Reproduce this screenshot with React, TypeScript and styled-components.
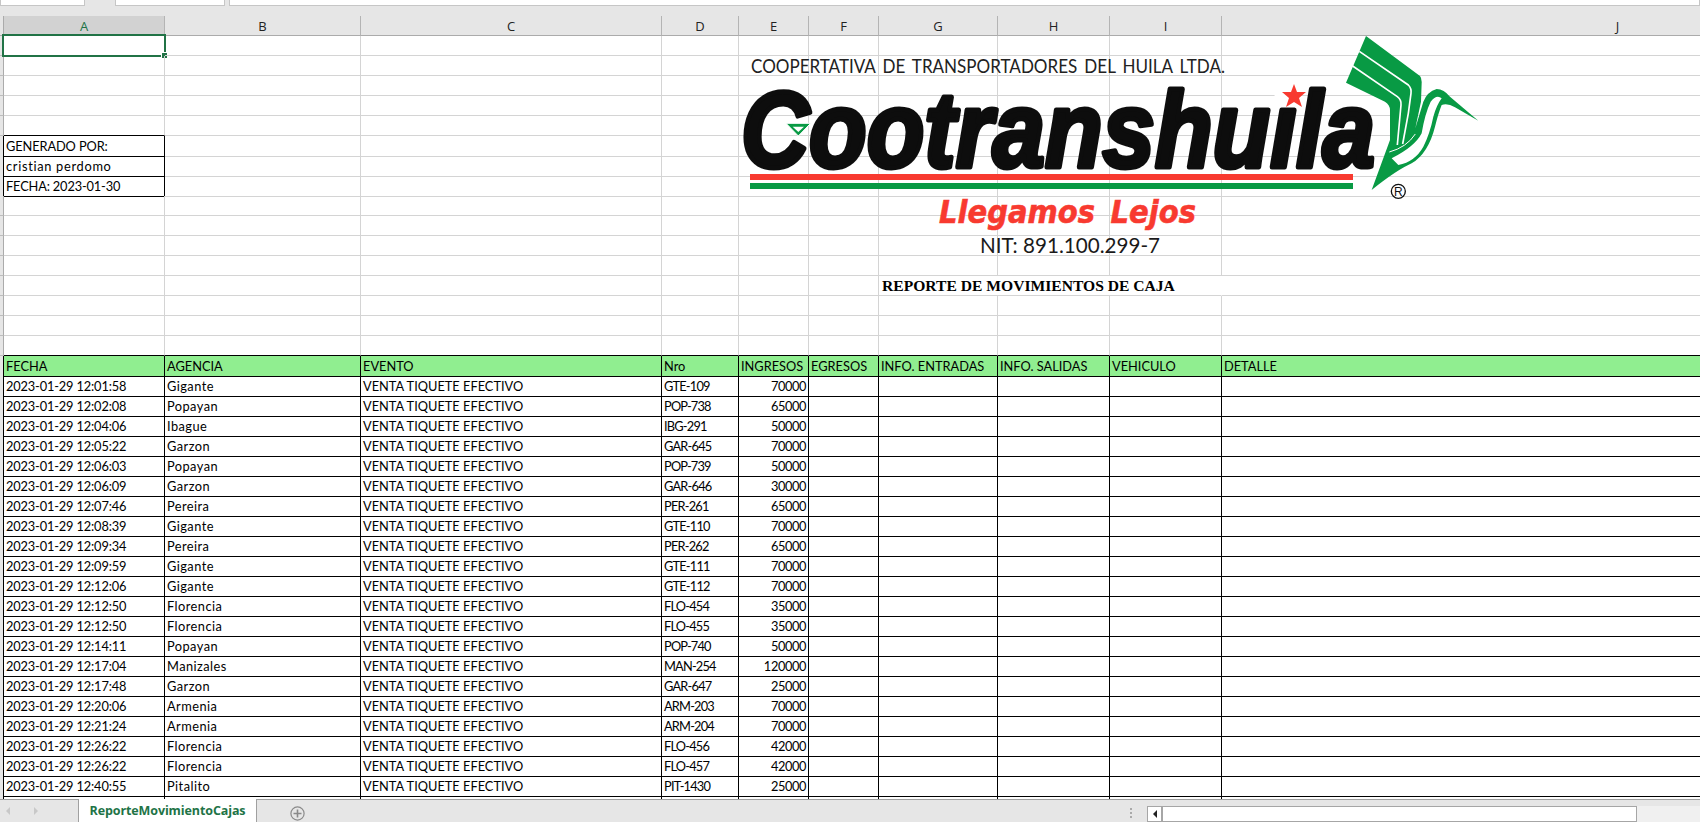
import styled, { createGlobalStyle } from 'styled-components';

const COLUMNS = '4px 161px 196px 301px 77px 70px 70px 119px 112px 112px 792px';
const LETTERS = ['A', 'B', 'C', 'D', 'E', 'F', 'G', 'H', 'I', 'J'];
const HEADINGS = ['FECHA', 'AGENCIA', 'EVENTO', 'Nro', 'INGRESOS', 'EGRESOS', 'INFO. ENTRADAS', 'INFO. SALIDAS', 'VEHICULO', 'DETALLE'];

const MOVEMENTS: [string, string, string, string][] = [
  ['12:01:58', 'Gigante', 'GTE-109', '70000'],
  ['12:02:08', 'Popayan', 'POP-738', '65000'],
  ['12:04:06', 'Ibague', 'IBG-291', '50000'],
  ['12:05:22', 'Garzon', 'GAR-645', '70000'],
  ['12:06:03', 'Popayan', 'POP-739', '50000'],
  ['12:06:09', 'Garzon', 'GAR-646', '30000'],
  ['12:07:46', 'Pereira', 'PER-261', '65000'],
  ['12:08:39', 'Gigante', 'GTE-110', '70000'],
  ['12:09:34', 'Pereira', 'PER-262', '65000'],
  ['12:09:59', 'Gigante', 'GTE-111', '70000'],
  ['12:12:06', 'Gigante', 'GTE-112', '70000'],
  ['12:12:50', 'Florencia', 'FLO-454', '35000'],
  ['12:12:50', 'Florencia', 'FLO-455', '35000'],
  ['12:14:11', 'Popayan', 'POP-740', '50000'],
  ['12:17:04', 'Manizales', 'MAN-254', '120000'],
  ['12:17:48', 'Garzon', 'GAR-647', '25000'],
  ['12:20:06', 'Armenia', 'ARM-203', '70000'],
  ['12:21:24', 'Armenia', 'ARM-204', '70000'],
  ['12:26:22', 'Florencia', 'FLO-456', '42000'],
  ['12:26:22', 'Florencia', 'FLO-457', '42000'],
  ['12:40:55', 'Pitalito', 'PIT-1430', '25000'],
];

const GENERATED_BY: [string, number][] = [
  ['GENERADO POR:', -0.1],
  ['cristian perdomo', 0.7],
  ['FECHA: 2023-01-30', -0.15],
];

const GlobalStyle = createGlobalStyle`
  html, body {
    margin: 0;
    padding: 0;
    background: #fff;
    overflow: hidden;
  }
  * {
    box-sizing: border-box;
  }
`;

const Window = styled.div`
  width: 1700px;
  height: 822px;
  display: flex;
  flex-direction: column;
  overflow: hidden;
  background: #e6e6e6;
  font-family: 'Lato', 'Liberation Sans', sans-serif;
`;

const FormulaStrip = styled.div`
  height: 16px;
  flex: none;
  display: flex;
  align-items: flex-start;
  background: #e6e6e6;
`;

const FormulaBox = styled.div<{ $width: number; $gap?: number }>`
  width: ${(p) => p.$width}px;
  margin-left: ${(p) => p.$gap ?? 0}px;
  height: 6px;
  background: #fff;
  border: 1px solid #c6c6c6;
  border-top: none;
`;

const ColumnBar = styled.div`
  height: 20px;
  flex: none;
  display: grid;
  grid-template-columns: ${COLUMNS};
`;

const CornerCell = styled.div`
  background: #e6e6e6;
  border-right: 1px solid #ababab;
  border-bottom: 1px solid #ababab;
`;

const ColumnLabel = styled.div<{ $active?: boolean }>`
  display: flex;
  align-items: center;
  justify-content: center;
  font-family: 'Open Sans', 'Liberation Sans', sans-serif;
  font-size: 13px;
  color: ${(p) => (p.$active ? '#217346' : '#222')};
  background: ${(p) => (p.$active ? '#d2d2d2' : '#e6e6e6')};
  border-right: 1px solid #b4b4b4;
  border-bottom: 1px solid #ababab;
`;

const SheetArea = styled.div`
  position: relative;
  flex: 1;
  min-height: 0;
  background: #fff;
`;

const Row = styled.div`
  height: 20px;
  display: grid;
  grid-template-columns: ${COLUMNS};
`;

const RowGutter = styled.div<{ $ink?: boolean }>`
  background: #e6e6e6;
  border-right: 1px solid ${(p) => (p.$ink ? '#000' : '#ababab')};
  border-bottom: 1px solid #bdbdbd;
`;

const Cell = styled.div<{
  $right?: 'ink' | 'none';
  $bottom?: 'ink';
  $fill?: boolean;
  $end?: boolean;
  $span?: number;
  $track?: number;
}>`
  position: relative;
  min-width: 0;
  padding: 0 2px;
  font-size: 12.8px;
  line-height: 20px;
  letter-spacing: ${(p) => p.$track ?? 0}px;
  color: #000;
  white-space: nowrap;
  text-align: ${(p) => (p.$end ? 'right' : 'left')};
  grid-column: span ${(p) => p.$span ?? 1};
  background: ${(p) => (p.$fill ? '#90ee90' : 'transparent')};
  border-right: 1px solid ${(p) => (p.$right === 'ink' ? '#000' : p.$right === 'none' ? 'transparent' : '#d4d4d4')};
  border-bottom: 1px solid ${(p) => (p.$bottom === 'ink' ? '#000' : '#d4d4d4')};
`;

const ReportTitle = styled.span`
  display: block;
  margin-left: 1px;
  font-family: 'Liberation Serif', serif;
  font-weight: 700;
  font-size: 15.6px;
  line-height: 19px;
`;

const Selection = styled.div`
  position: absolute;
  left: -2px;
  top: -2px;
  right: -2px;
  bottom: -2px;
  border: 2px solid #217346;
  pointer-events: none;
`;

const SelectionHandle = styled.div`
  position: absolute;
  right: -3px;
  bottom: -3px;
  width: 6px;
  height: 6px;
  background: #217346;
  border: 1px solid #fff;
  border-right: none;
  border-bottom: none;
`;

const LogoOverlay = styled.svg`
  position: absolute;
  left: 720px;
  top: 0;
  width: 780px;
  height: 264px;
  pointer-events: none;
`;

const BottomBar = styled.div`
  position: relative;
  height: 23px;
  flex: none;
  display: flex;
  align-items: stretch;
  background: #e6e6e6;
  border-top: 1px solid #a0a0a0;
`;

const SheetNav = styled.div`
  width: 78px;
  display: flex;
  align-items: center;
  gap: 24px;
  padding-left: 6px;
`;

const NavArrow = styled.span<{ $next?: boolean }>`
  width: 0;
  height: 0;
  border-top: 4px solid transparent;
  border-bottom: 4px solid transparent;
  ${(p) => (p.$next ? 'border-left: 4px solid #c8c8c8;' : 'border-right: 4px solid #c8c8c8;')}
`;

const SheetTab = styled.div`
  width: 179px;
  margin-top: -1px;
  display: flex;
  align-items: center;
  justify-content: center;
  background: #fff;
  border-left: 1px solid #a0a0a0;
  border-right: 1px solid #a0a0a0;
  font-family: 'Open Sans', 'Liberation Sans', sans-serif;
  font-size: 12.5px;
  font-weight: 700;
  letter-spacing: -0.1px;
  color: #217346;
`;

const AddSheet = styled.div`
  width: 15px;
  height: 15px;
  margin: 6px 0 0 33px;
  display: flex;
  align-items: center;
  justify-content: center;
`;

const Spacer = styled.div`
  flex: 1;
`;

const SplitDots = styled.div`
  width: 17px;
  padding-top: 8px;
  display: flex;
  flex-direction: column;
  align-items: flex-start;
  gap: 2px;
`;

const SplitDot = styled.span`
  width: 2px;
  height: 2px;
  background: #aaa;
`;

const ScrollTrack = styled.div`
  width: 490px;
  margin-top: 6px;
  display: flex;
  background: #fff;
  border: 1px solid #a6a6a6;
`;

const ScrollButton = styled.div`
  width: 15px;
  display: flex;
  align-items: center;
  justify-content: center;
  border-right: 2px solid #a6a6a6;
`;

const ScrollArrow = styled.span`
  width: 0;
  height: 0;
  border-top: 4px solid transparent;
  border-bottom: 4px solid transparent;
  border-right: 4px solid #222;
`;

const ScrollRest = styled.div`
  width: 63px;
  margin-top: 6px;
  background: #f0f0f0;
`;

function Logo() {
  return (
    <LogoOverlay viewBox="720 36 780 264">
      <text
        x="751"
        y="73"
        fontFamily="Lato, sans-serif"
        fontSize="18.5"
        fill="#222"
        wordSpacing="3"
        textLength="474"
        lengthAdjust="spacingAndGlyphs"
      >
        COOPERTATIVA DE TRANSPORTADORES DEL HUILA LTDA.
      </text>

      <text
        x="741"
        y="167"
        fontFamily="'Liberation Sans', sans-serif"
        fontWeight="700"
        fontStyle="italic"
        fontSize="108"
        fill="#0d0d0d"
        stroke="#0d0d0d"
        strokeWidth="5"
        strokeLinejoin="round"
        textLength="634"
        lengthAdjust="spacingAndGlyphs"
      >
        Cootranshuila
      </text>

      <g transform="translate(720 30) scale(0.3333)">
        <polygon points="198,280 272,280 235,318" fill="#089a44" stroke="#fff" strokeWidth="3" />
        <polygon points="218,290 252,290 235,306" fill="#fff" />
      </g>

      {/* the star stands in for the dot of the i */}
      <polygon points="1278,80 1304,80 1298,107 1272,107" fill="#fff" />
      <polygon
        points="1294,84 1297,92 1306,92 1299,98 1302,107 1294,102 1286,107 1289,98 1282,92 1291,92"
        fill="#f83a30"
      />

      <rect x="750" y="174" width="603" height="6" fill="#f83a30" />
      <rect x="750" y="183" width="603" height="6" fill="#089a44" />

      <g transform="translate(1340 30) scale(0.3333)">
        <path
          d="M78 18 L240 138 Q246 145 245 160 L243 215 L226 295 L250 215 Q262 185 290 177 Q312 178 330 200 L415 272 L345 232 Q322 218 305 225 Q295 250 285 290 Q265 370 215 400 Q170 420 95 480 L150 330 L150 240 Q150 225 135 215 L18 158 Z"
          fill="#089a44"
        />
        <path
          d="M155 385 L175 405 Q225 395 250 350 Q270 310 280 260 Q290 225 305 205 Q290 192 272 215 Q255 250 245 310 Q225 350 155 385 Z"
          fill="#fff"
        />
        <path d="M58 64 L205 165 Q215 175 213 190 L205 250 L188 342" fill="none" stroke="#fff" strokeWidth="5" />
        <path d="M38 108 L172 200 Q185 210 183 225 L172 345" fill="none" stroke="#fff" strokeWidth="5" />
        <path d="M148 366 Q200 352 226 312" fill="none" stroke="#fff" strokeWidth="3" />
        <circle cx="175" cy="484" r="21" fill="#fff" stroke="#111" strokeWidth="4" />
        <text x="175" y="497" textAnchor="middle" fontFamily="'Liberation Sans', sans-serif" fontSize="36" fill="#111">
          R
        </text>
      </g>

      <text
        x="939"
        y="223"
        fontFamily="'DejaVu Sans', sans-serif"
        fontWeight="700"
        fontStyle="italic"
        fontSize="32"
        fill="#f83a30"
        stroke="#f83a30"
        strokeWidth="0.6"
        wordSpacing="6"
        textLength="257"
        lengthAdjust="spacingAndGlyphs"
      >
        Llegamos Lejos
      </text>

      <text x="980" y="253" fontFamily="Lato, sans-serif" fontSize="22" fill="#1a1a1a" textLength="180" lengthAdjust="spacingAndGlyphs">
        NIT: 891.100.299-7
      </text>
    </LogoOverlay>
  );
}

function IntroRows() {
  return (
    <>
      {Array.from({ length: 16 }, (_, i) => {
        const box = i >= 5 && i <= 7 ? GENERATED_BY[i - 5] : null;

        if (i === 12) {
          return (
            <Row key={i}>
              <RowGutter />
              {LETTERS.slice(0, 6).map((letter) => (
                <Cell key={letter} />
              ))}
              <Cell $span={3} $right="none">
                <ReportTitle>REPORTE DE MOVIMIENTOS DE CAJA</ReportTitle>
              </Cell>
              <Cell />
            </Row>
          );
        }

        return (
          <Row key={i}>
            <RowGutter $ink={box !== null} />
            {LETTERS.map((letter, col) => {
              if (col === 0 && box) {
                return (
                  <Cell key={letter} $right="ink" $bottom="ink" $track={box[1]}>
                    {box[0]}
                  </Cell>
                );
              }
              if (col === 0 && i === 0) {
                return (
                  <Cell key={letter}>
                    <Selection>
                      <SelectionHandle />
                    </Selection>
                  </Cell>
                );
              }
              return <Cell key={letter} $bottom={i === 15 || (col === 0 && i === 4) ? 'ink' : undefined} />;
            })}
          </Row>
        );
      })}
    </>
  );
}

function MovementRow({ time, agency, number, amount }: { time: string; agency: string; number: string; amount: string }) {
  return (
    <Row>
      <RowGutter $ink />
      <Cell $right="ink" $bottom="ink" $track={-0.15}>2023-01-29 {time}</Cell>
      <Cell $right="ink" $bottom="ink" $track={0.45}>{agency}</Cell>
      <Cell $right="ink" $bottom="ink">VENTA TIQUETE EFECTIVO</Cell>
      <Cell $right="ink" $bottom="ink" $track={-0.8}>{number}</Cell>
      <Cell $right="ink" $bottom="ink" $end $track={-0.4}>{amount}</Cell>
      <Cell $right="ink" $bottom="ink" />
      <Cell $right="ink" $bottom="ink" />
      <Cell $right="ink" $bottom="ink" />
      <Cell $right="ink" $bottom="ink" />
      <Cell $bottom="ink" />
    </Row>
  );
}

export default function App() {
  return (
    <>
      <GlobalStyle />
      <Window>
        <FormulaStrip>
          <FormulaBox $width={85} />
          <FormulaBox $width={110} $gap={30} />
          <FormulaBox $width={1471} $gap={4} />
        </FormulaStrip>

        <ColumnBar>
          <CornerCell />
          {LETTERS.map((letter) => (
            <ColumnLabel key={letter} $active={letter === 'A'}>
              {letter}
            </ColumnLabel>
          ))}
        </ColumnBar>

        <SheetArea>
          <IntroRows />

          <Row>
            <RowGutter $ink />
            {HEADINGS.map((heading, i) => (
              <Cell key={heading} $fill $right={i < 9 ? 'ink' : undefined} $bottom="ink">
                {heading}
              </Cell>
            ))}
          </Row>

          {MOVEMENTS.map(([time, agency, number, amount]) => (
            <MovementRow key={number} time={time} agency={agency} number={number} amount={amount} />
          ))}

          <Row>
            <RowGutter $ink />
            {LETTERS.slice(0, 9).map((letter) => (
              <Cell key={letter} $right="ink" />
            ))}
            <Cell />
          </Row>

          <Logo />
        </SheetArea>

        <BottomBar>
          <SheetNav>
            <NavArrow />
            <NavArrow $next />
          </SheetNav>
          <SheetTab>ReporteMovimientoCajas</SheetTab>
          <AddSheet>
            <svg width="15" height="15" viewBox="0 0 15 15">
              <circle cx="7.5" cy="7.5" r="6.6" fill="none" stroke="#8a8a8a" strokeWidth="1.2" />
              <path d="M7.5 3.5v8M3.5 7.5h8" stroke="#8a8a8a" strokeWidth="1.6" />
            </svg>
          </AddSheet>
          <Spacer />
          <SplitDots>
            <SplitDot />
            <SplitDot />
            <SplitDot />
          </SplitDots>
          <ScrollTrack>
            <ScrollButton>
              <ScrollArrow />
            </ScrollButton>
          </ScrollTrack>
          <ScrollRest />
        </BottomBar>
      </Window>
    </>
  );
}
